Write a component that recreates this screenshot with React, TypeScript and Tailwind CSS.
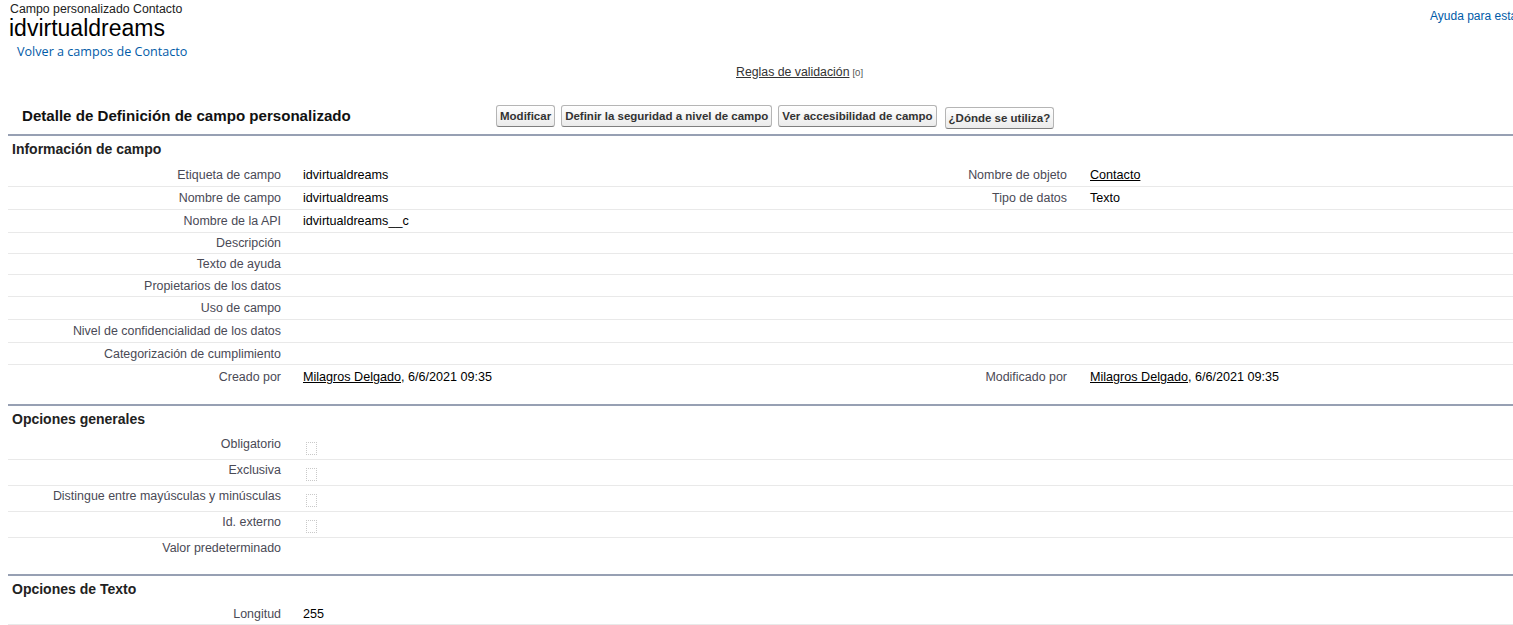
import React from "react";

type RowProps = {
  label: string;
  value?: React.ReactNode;
  label2?: string;
  value2?: React.ReactNode;
  h: string;
  last?: boolean;
};

const Row = ({ label, value, label2, value2, h, last }: RowProps) => (
  <div
    className={`grid grid-cols-[283px_496px_291px_1fr] items-center ${h} ${
      last ? "" : "border-b border-[#e9e9e9]"
    }`}
  >
    <div className="pr-[10px] text-right text-[12.45px] leading-[14px] text-[#4a4a56]">{label}</div>
    <div className="pl-[12px] text-[12.6px] leading-[14px] text-black">{value}</div>
    <div className="pr-[11px] text-right text-[12.45px] leading-[14px] text-[#4a4a56]">{label2}</div>
    <div className="pl-[12px] text-[12.6px] leading-[14px] text-black">{value2}</div>
  </div>
);

const CheckRow = ({ label, check = true, last }: { label: string; check?: boolean; last?: boolean }) => (
  <div
    className={`grid h-[26px] grid-cols-[283px_1fr] ${last ? "h-[22px]" : "border-b border-[#e9e9e9]"}`}
  >
    <div className="pt-[3px] pr-[10px] text-right text-[12.45px] leading-[14px] text-[#4a4a56]">{label}</div>
    <div className="pl-[15px] pt-[8px]">
      {check && <span className="block h-[13px] w-[11px] border border-dotted border-[#c9c9c9]" />}
    </div>
  </div>
);

const SectionHead = ({ title, pb = "pb-[7px]" }: { title: string; pb?: string }) => (
  <div className={`border-t-2 border-[#97a0b3] pl-[4px] pt-[5px] ${pb}`}>
    <h3 className="text-[14px] font-bold leading-[16px] text-[#222]">{title}</h3>
  </div>
);

const Btn = ({ children }: { children: React.ReactNode }) => (
  <button className="h-[22px] rounded-[3px] border border-[#b5b5b5] border-b-[#7f7f7f] bg-gradient-to-b from-white to-[#ebebeb] px-[3px] text-[11.5px] font-bold leading-[18px] text-[#333]">
    {children}
  </button>
);

const UserLink = () => (
  <>
    <span className="underline">Milagros Delgado</span>, 6/6/2021 09:35
  </>
);

export default function App() {
  return (
    <div className="w-full overflow-hidden bg-white font-['Liberation_Sans',Arial,sans-serif]">
      <div className="w-[1570px]">
        {/* page header */}
        <div className="flex h-[64px] justify-between">
          <div className="pl-[10px] pt-[2px]">
            <div className="text-[12.3px] leading-[14px] text-[#222]">Campo personalizado Contacto</div>
            <h1 className="-ml-[1px] text-[23px] leading-[24px] text-black">idvirtualdreams</h1>
            <a className="ml-[7px] mt-[4px] block font-['Open_Sans',sans-serif] text-[12.6px] leading-[16px] text-[#015ba7]">
              Volver a campos de Contacto
            </a>
          </div>
          <div className="w-[140px] shrink-0 pt-[8px]">
            <a className="block whitespace-nowrap text-[12px] leading-[16px] text-[#015ba7]">
              Ayuda para esta página
            </a>
          </div>
        </div>

        <div className="h-[16px] pl-[736px] text-[12.3px] leading-[16px]">
          <a className="text-[#333] underline">Reglas de validación</a>
          <span className="ml-[3px] text-[9.5px] text-[#555]">[0]</span>
        </div>

        <div className="pl-[8px]">
          {/* title + buttons */}
          <div className="flex h-[54px] items-start pt-[25px]">
            <h2 className="w-[488px] pl-[14px] text-[15.1px] font-bold leading-[22px] text-[#111]">
              Detalle de Definición de campo personalizado
            </h2>
            <div className="flex gap-[6px]">
              <Btn>Modificar</Btn>
              <Btn>Definir la seguridad a nivel de campo</Btn>
              <Btn>Ver accesibilidad de campo</Btn>
              <div className="ml-[2px]">
                <Btn>¿Dónde se utiliza?</Btn>
              </div>
            </div>
          </div>

          <SectionHead title="Información de campo" />
          <Row h="h-[23px]" label="Etiqueta de campo" value="idvirtualdreams" label2="Nombre de objeto" value2={<span className="underline">Contacto</span>} />
          <Row h="h-[23px]" label="Nombre de campo" value="idvirtualdreams" label2="Tipo de datos" value2="Texto" />
          <Row h="h-[23px]" label="Nombre de la API" value="idvirtualdreams__c" />
          <Row h="h-[21px]" label="Descripción" />
          <Row h="h-[21px]" label="Texto de ayuda" />
          <Row h="h-[22px]" label="Propietarios de los datos" />
          <Row h="h-[23px]" label="Uso de campo" />
          <Row h="h-[23px]" label="Nivel de confidencialidad de los datos" />
          <Row h="h-[22px]" label="Categorización de cumplimiento" />
          <Row h="h-[23px]" label="Creado por" value={<UserLink />} label2="Modificado por" value2={<UserLink />} last />
          <div className="h-[16px]" />

          <SectionHead title="Opciones generales" />
          <CheckRow label="Obligatorio" />
          <CheckRow label="Exclusiva" />
          <CheckRow label="Distingue entre mayúsculas y minúsculas" />
          <CheckRow label="Id. externo" />
          <CheckRow label="Valor predeterminado" check={false} last />
          <div className="h-[10px]" />

          <SectionHead title="Opciones de Texto" pb="pb-[6px]" />
          <Row h="h-[22px]" label="Longitud" value="255" />
        </div>
      </div>
    </div>
  );
}
